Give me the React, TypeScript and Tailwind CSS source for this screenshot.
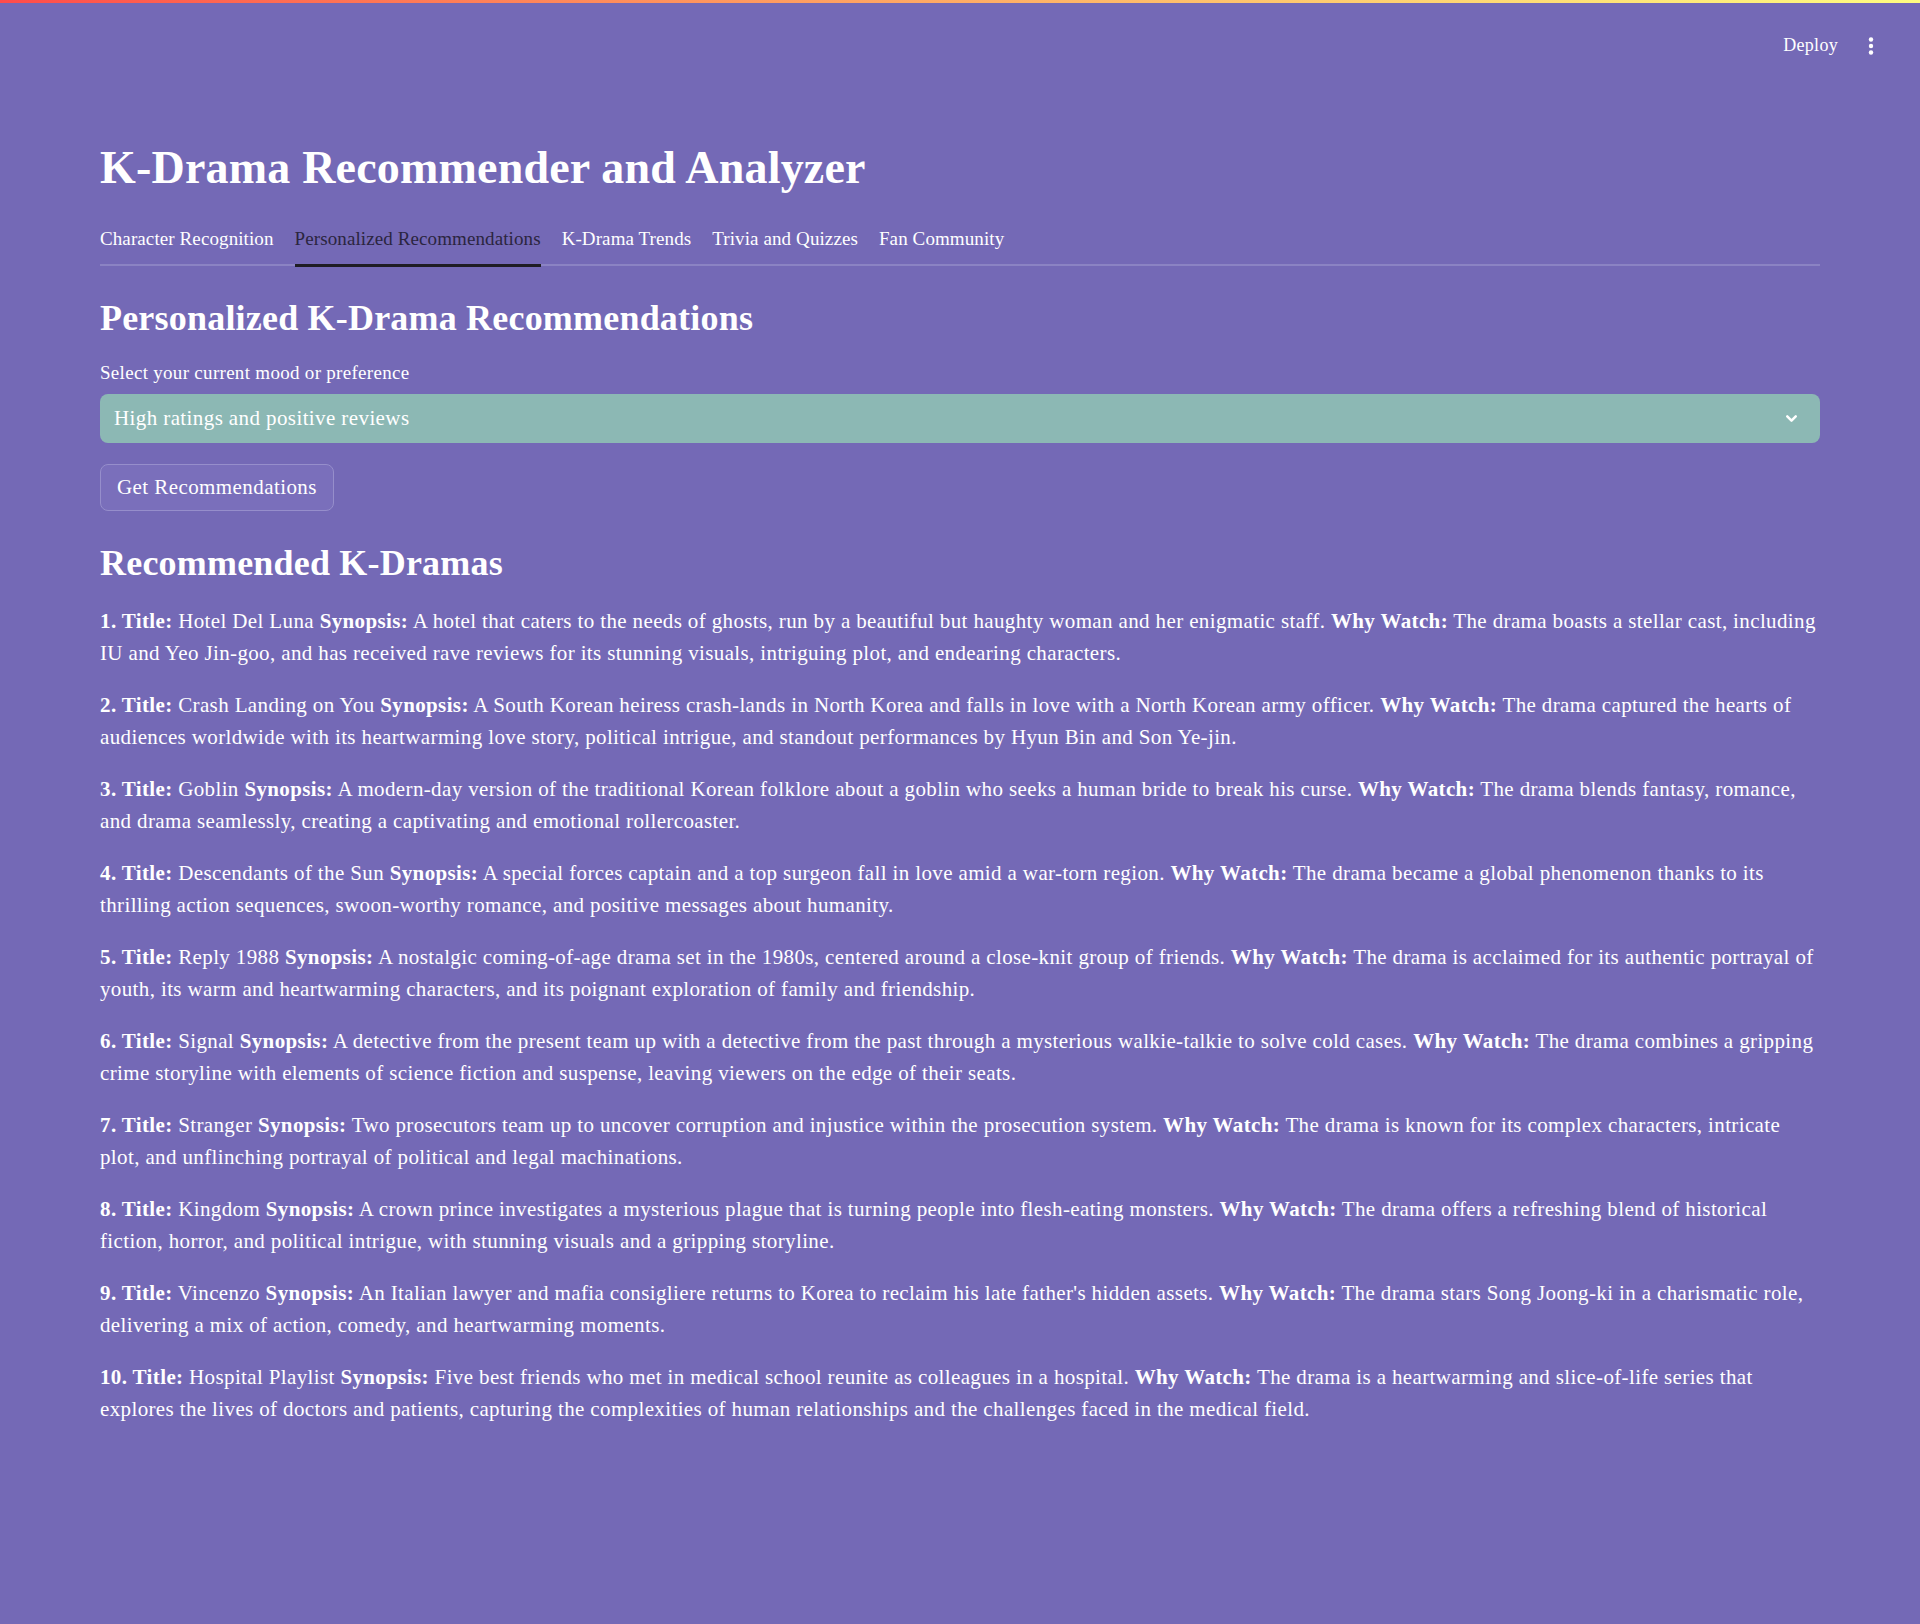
import { useState } from "react";

const dramas = [
  {
    title: "Hotel Del Luna",
    synopsis:
      "A hotel that caters to the needs of ghosts, run by a beautiful but haughty woman and her enigmatic staff.",
    why: "The drama boasts a stellar cast, including IU and Yeo Jin-goo, and has received rave reviews for its stunning visuals, intriguing plot, and endearing characters.",
  },
  {
    title: "Crash Landing on You",
    synopsis:
      "A South Korean heiress crash-lands in North Korea and falls in love with a North Korean army officer.",
    why: "The drama captured the hearts of audiences worldwide with its heartwarming love story, political intrigue, and standout performances by Hyun Bin and Son Ye-jin.",
  },
  {
    title: "Goblin",
    synopsis:
      "A modern-day version of the traditional Korean folklore about a goblin who seeks a human bride to break his curse.",
    why: "The drama blends fantasy, romance, and drama seamlessly, creating a captivating and emotional rollercoaster.",
  },
  {
    title: "Descendants of the Sun",
    synopsis: "A special forces captain and a top surgeon fall in love amid a war-torn region.",
    why: "The drama became a global phenomenon thanks to its thrilling action sequences, swoon-worthy romance, and positive messages about humanity.",
  },
  {
    title: "Reply 1988",
    synopsis:
      "A nostalgic coming-of-age drama set in the 1980s, centered around a close-knit group of friends.",
    why: "The drama is acclaimed for its authentic portrayal of youth, its warm and heartwarming characters, and its poignant exploration of family and friendship.",
  },
  {
    title: "Signal",
    synopsis:
      "A detective from the present team up with a detective from the past through a mysterious walkie-talkie to solve cold cases.",
    why: "The drama combines a gripping crime storyline with elements of science fiction and suspense, leaving viewers on the edge of their seats.",
  },
  {
    title: "Stranger",
    synopsis:
      "Two prosecutors team up to uncover corruption and injustice within the prosecution system.",
    why: "The drama is known for its complex characters, intricate plot, and unflinching portrayal of political and legal machinations.",
  },
  {
    title: "Kingdom",
    synopsis:
      "A crown prince investigates a mysterious plague that is turning people into flesh-eating monsters.",
    why: "The drama offers a refreshing blend of historical fiction, horror, and political intrigue, with stunning visuals and a gripping storyline.",
  },
  {
    title: "Vincenzo",
    synopsis:
      "An Italian lawyer and mafia consigliere returns to Korea to reclaim his late father's hidden assets.",
    why: "The drama stars Song Joong-ki in a charismatic role, delivering a mix of action, comedy, and heartwarming moments.",
  },
  {
    title: "Hospital Playlist",
    synopsis:
      "Five best friends who met in medical school reunite as colleagues in a hospital.",
    why: "The drama is a heartwarming and slice-of-life series that explores the lives of doctors and patients, capturing the complexities of human relationships and the challenges faced in the medical field.",
  },
];

const tabs = [
  "Character Recognition",
  "Personalized Recommendations",
  "K-Drama Trends",
  "Trivia and Quizzes",
  "Fan Community",
];

export default function App() {
  const [active, setActive] = useState(1);

  return (
    <div
      className="min-h-[1624px] bg-[#7469b6] text-white"
      style={{ fontFamily: '"Liberation Serif", "DejaVu Serif", serif' }}
    >
      {/* decoration bar */}
      <div className="h-[3px] bg-gradient-to-r from-[#ff4b4b] to-[#fffd80]" />

      {/* Header */}
      <header className="h-[84px] flex items-center justify-end pr-[46px] gap-[30px]">
        <span className="text-[18px] tracking-[0.3px]">Deploy</span>
        <svg width="6" height="18" viewBox="0 0 6 18" className="mt-[1px]">
          <circle cx="3" cy="2.5" r="2.2" fill="white" />
          <circle cx="3" cy="9" r="2.2" fill="white" />
          <circle cx="3" cy="15.5" r="2.2" fill="white" />
        </svg>
      </header>

      <main className="px-[100px]">
        <h1 className="mt-[54px] text-[46px] leading-[54px] font-bold tracking-[0.2px]">
          K-Drama Recommender and Analyzer
        </h1>

        {/* Tabs */}
        <div className="mt-[22px] flex gap-[21px] border-b-2 border-[#8b83c3]">
          {tabs.map((t, i) => (
            <button
              key={t}
              onClick={() => setActive(i)}
              className={
                "relative h-[47px] pt-[6px] pb-[9px] text-[19px] leading-[32px] tracking-[0.1px] " +
                (i === active ? "text-[#2b2540]" : "text-white")
              }
            >
              {t}
              {i === active && (
                <span className="absolute left-0 right-0 bottom-[-3px] h-[3px] bg-[#1f1d24]" />
              )}
            </button>
          ))}
        </div>

        <h2 className="mt-[32px] text-[36px] leading-[41px] font-bold tracking-[0.2px]">
          Personalized K-Drama Recommendations
        </h2>

        <label className="block mt-[22px] text-[19px] leading-[24px] tracking-[0.3px]">
          Select your current mood or preference
        </label>

        <div className="mt-[9px] h-[49px] rounded-[8px] bg-[#8cb8b4] flex items-center justify-between pl-[14px] pr-[20px]">
          <span className="text-[21px] tracking-[0.4px]">High ratings and positive reviews</span>
          <svg width="17" height="17" viewBox="0 0 24 24" fill="none" stroke="white" strokeWidth="3.5" strokeLinecap="round" strokeLinejoin="round">
            <path d="M6 9l6 6 6-6" />
          </svg>
        </div>

        <button className="mt-[21px] h-[47px] px-[16px] rounded-[8px] border border-[#968ecb] bg-[#7a6fbb] text-[21px] tracking-[0.42px]">
          Get Recommendations
        </button>

        <h2 className="mt-[32px] text-[36px] leading-[41px] font-bold tracking-[0.2px]">
          Recommended K-Dramas
        </h2>

        <div className="mt-[21px]">
          {dramas.map((d, i) => (
            <p key={d.title} className="mb-[20px] text-[21px] leading-[32px] tracking-[0.37px]">
              <strong>{i + 1}. Title:</strong> {d.title} <strong>Synopsis:</strong> {d.synopsis}{" "}
              <strong>Why Watch:</strong> {d.why}
            </p>
          ))}
        </div>
      </main>
    </div>
  );
}
